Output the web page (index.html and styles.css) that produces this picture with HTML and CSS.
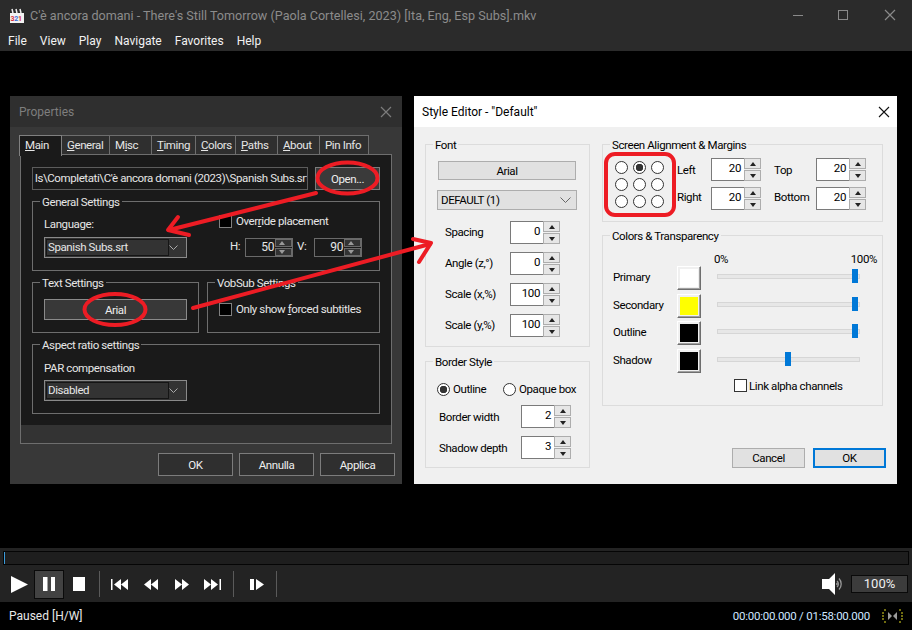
FILE: index.html
```html
<!DOCTYPE html>
<html lang="en">
<head>
    <meta charset="UTF-8">
    <title>Media Player Classic</title>
    <link rel="stylesheet" href="styles.css">
</head>
<body>
<div class="app">
    <header class="titlebar">
        <svg class="app-icon" width="16" height="16" viewBox="0 0 16 16">
            <rect x="1" y="5" width="14" height="10" fill="#f2f2f2"/>
            <path d="M1 1h14v4H1z" fill="#2a2a2a"/>
            <path d="M3 1l1 4M7 1l1 4M11 1l1 4" stroke="#eee" stroke-width="1.500"/>
            <text class="icon-digits" x="1.500" y="13"><tspan fill="#d8343a">3</tspan><tspan fill="#3a6fd8">2</tspan><tspan fill="#d8343a">1</tspan></text>
        </svg>
        <span class="title-text">C'è ancora domani - There's Still Tomorrow (Paola Cortellesi, 2023) [Ita, Eng, Esp Subs].mkv</span>
        <div class="win-controls">
            <svg width="46" height="26" viewBox="0 0 46 26"><path d="M18 15.500h10" stroke="#8a8a8a"/></svg>
            <svg width="46" height="26" viewBox="0 0 46 26"><rect x="17.500" y="10.500" width="9" height="9" fill="none" stroke="#8a8a8a"/></svg>
            <svg width="46" height="26" viewBox="0 0 46 26"><path d="M18 10l10 10M28 10l-10 10" stroke="#8a8a8a" stroke-width="1.200"/></svg>
        </div>
    </header>
    <nav class="menubar">
        <span>File</span><span>View</span><span>Play</span><span>Navigate</span><span>Favorites</span><span>Help</span>
    </nav>

    <main class="video"></main>

    <div class="seek-wrap">
        <div class="seekbar"><div class="seek-pos"></div></div>
    </div>
    <div class="toolbar">
        <button class="tool tool-first"><svg width="18" height="17" viewBox="0 0 18 17"><path d="M0 0l17 8.500L0 17z" fill="#fff"/></svg></button>
        <button class="tool tool-active"><svg width="12" height="14" viewBox="0 0 12 14"><path d="M0 0h4.500v14H0zM8 0h4v14H8z" fill="#fff"/></svg></button>
        <button class="tool"><svg width="12" height="14" viewBox="0 0 12 14"><rect width="12" height="14" fill="#fff"/></svg></button>
        <i class="tool-sep"></i>
        <button class="tool tool-sm"><svg width="17" height="11" viewBox="0 0 17 11"><path d="M0 0h1.500v11H0zM10 0v11L3 5.500zM17 0v11l-7-5.500z" fill="#fff"/></svg></button>
        <button class="tool tool-sm"><svg width="14" height="11" viewBox="0 0 14 11"><path d="M7 0v11L0 5.500zM14 0v11L7 5.500z" fill="#fff"/></svg></button>
        <button class="tool tool-sm"><svg width="14" height="11" viewBox="0 0 14 11"><path d="M0 0v11l7-5.500zM7 0v11l7-5.500z" fill="#fff"/></svg></button>
        <button class="tool tool-sm"><svg width="17" height="11" viewBox="0 0 17 11"><path d="M0 0v11l7-5.500zM7 0v11l7-5.500zM15.500 0H17v11h-1.500z" fill="#fff"/></svg></button>
        <i class="tool-sep"></i>
        <button class="tool tool-step"><svg width="14" height="11" viewBox="0 0 14 11"><path d="M0 0h4v11H0zM6 0v11l8-5.500z" fill="#fff"/></svg></button>
        <i class="tool-sep tool-sep-last"></i>
        <svg class="speaker" width="23" height="22" viewBox="0 0 23 22">
            <path d="M0 6h7l6-6v22l-6-6H0z" fill="#fff"/>
            <path d="M15 8a4 4 0 0 1 0 6M17 5.500a8 8 0 0 1 0 11M14.500 10a1.500 1.500 0 0 1 0 2" fill="none" stroke="#9a9a9a" stroke-width="1.300"/>
        </svg>
        <div class="volume">100%</div>
    </div>
    <footer class="statusbar">
        <span class="status-text">Paused [H/W]</span>
        <span class="status-time">00:00:00.000 / 01:58:00.000</span>
        <svg class="status-icon" width="21" height="14" viewBox="0 0 21 14">
            <path d="M6 3l4 4-4 4zM15 3l-4 4 4 4z" fill="#9b9b9b"/>
            <path d="M2 1h2M0 4h2M0 7h2M0 10h2M2 13h2M17 1h2M19 4h2M19 7h2M19 10h2M17 13h2" stroke="#e0d820"/>
        </svg>
    </footer>

    <!-- Properties dialog -->
    <section class="dialog dialog-dark">
        <div class="dlg-title">
            <span>Properties</span>
            <svg width="12" height="12" viewBox="0 0 12 12"><path d="M1 1l10 10M11 1L1 11" stroke="#7c7c7c" stroke-width="1.200"/></svg>
        </div>
        <div class="dlg-main">
            <div class="tabs">
                <span class="tab tab-on tab-w43"><u>M</u>ain</span>
                <span class="tab tab-w48"><u>G</u>eneral</span>
                <span class="tab tab-w42">M<u>i</u>sc</span>
                <span class="tab tab-w44"><u>T</u>iming</span>
                <span class="tab tab-w40"><u>C</u>olors</span>
                <span class="tab tab-w42"><u>P</u>aths</span>
                <span class="tab tab-w42"><u>A</u>bout</span>
                <span class="tab tab-w49">Pin Info</span>
            </div>
            <div class="tab-page">
                <div class="page-body">
                    <div class="path-row">
                        <div class="edit-path">ls\Completati\C'è ancora domani (2023)\Spanish Subs.srt</div>
                        <button class="dbtn dbtn-open">Open...</button>
                    </div>
                    <div class="group group-general">
                        <span class="group-title">General Settings</span>
                        <div class="gen-left">
                            <div class="lbl">Language:</div>
                            <div class="combo combo-dark"><span class="combo-val">Spanish Subs.srt</span><svg width="9" height="5" viewBox="0 0 9 5"><path d="M.5.500l4 4 4-4" fill="none" stroke="#aaa"/></svg></div>
                        </div>
                        <div class="gen-right">
                            <label class="check"><i class="box box-dark"></i><span>Over<u>r</u>ide placement</span></label>
                            <div class="hv-row">
                                <span class="hv-h">H:</span>
                                <div class="spin spin-dark spin-48"><span class="spin-val">50</span><span class="spin-btns"><i class="up"></i><i class="down"></i></span></div>
                                <span class="hv-v">V:</span>
                                <div class="spin spin-dark spin-48"><span class="spin-val">90</span><span class="spin-btns"><i class="up"></i><i class="down"></i></span></div>
                            </div>
                        </div>
                    </div>
                    <div class="group-pair">
                        <div class="group group-text">
                            <span class="group-title">Text Settings</span>
                            <button class="dbtn dbtn-font">Arial</button>
                        </div>
                        <div class="group group-vob">
                            <span class="group-title">VobSub Settings</span>
                            <label class="check"><i class="box box-dark"></i><span>Only show <u>f</u>orced subtitles</span></label>
                        </div>
                    </div>
                    <div class="group group-aspect">
                        <span class="group-title">Aspect ratio settings</span>
                        <div class="lbl">PAR compensation</div>
                        <div class="combo combo-dark"><span class="combo-val">Disabled</span><svg width="9" height="5" viewBox="0 0 9 5"><path d="M.5.500l4 4 4-4" fill="none" stroke="#aaa"/></svg></div>
                    </div>
                </div>
                <div class="page-strip"></div>
            </div>
            <div class="dlg-buttons">
                <button class="dbtn">OK</button>
                <button class="dbtn">Annulla</button>
                <button class="dbtn">Applica</button>
            </div>
        </div>
    </section>

    <!-- Style editor dialog -->
    <section class="dialog dialog-light">
        <div class="dlg-title">
            <span>Style Editor - "Default"</span>
            <svg width="12" height="12" viewBox="0 0 12 12"><path d="M1 1l10 10M11 1L1 11" stroke="#111" stroke-width="1.100"/></svg>
        </div>
        <div class="style-body">
            <div class="style-left">
                <div class="group lgroup group-font">
                    <span class="group-title">Font</span>
                    <button class="lbtn lbtn-font">Arial</button>
                    <div class="combo combo-light"><span>DEFAULT (1)</span><svg width="11" height="6" viewBox="0 0 11 6"><path d="M.5.500l5 5 5-5" fill="none" stroke="#666"/></svg></div>
                    <div class="font-rows">
                        <span>Spacing</span>
                        <div class="spin spin-light"><span class="spin-val">0</span><span class="spin-btns"><i class="up"></i><i class="down"></i></span></div>
                        <span>Angle (z,°)</span>
                        <div class="spin spin-light"><span class="spin-val">0</span><span class="spin-btns"><i class="up"></i><i class="down"></i></span></div>
                        <span>Scale (x,%)</span>
                        <div class="spin spin-light"><span class="spin-val">100</span><span class="spin-btns"><i class="up"></i><i class="down"></i></span></div>
                        <span>Scale (y,%)</span>
                        <div class="spin spin-light"><span class="spin-val">100</span><span class="spin-btns"><i class="up"></i><i class="down"></i></span></div>
                    </div>
                </div>
                <div class="group lgroup group-border">
                    <span class="group-title">Border Style</span>
                    <div class="radio-row">
                        <label class="radio-label radio-outline"><i class="radio radio-on"></i>Outline</label>
                        <label class="radio-label"><i class="radio"></i>Opaque box</label>
                    </div>
                    <div class="border-rows">
                        <span>Border width</span>
                        <div class="spin spin-light"><span class="spin-val">2</span><span class="spin-btns"><i class="up"></i><i class="down"></i></span></div>
                        <span>Shadow depth</span>
                        <div class="spin spin-light"><span class="spin-val">3</span><span class="spin-btns"><i class="up"></i><i class="down"></i></span></div>
                    </div>
                </div>
            </div>
            <div class="style-right">
                <div class="group lgroup group-screen">
                    <span class="group-title">Screen Alignment &amp; Margins</span>
                    <div class="radio-grid">
                        <i class="radio"></i><i class="radio radio-on"></i><i class="radio"></i>
                        <i class="radio"></i><i class="radio"></i><i class="radio"></i>
                        <i class="radio"></i><i class="radio"></i><i class="radio"></i>
                    </div>
                    <div class="margin-grid">
                        <span>Left</span>
                        <div class="spin spin-light"><span class="spin-val">20</span><span class="spin-btns"><i class="up"></i><i class="down"></i></span></div>
                        <span class="margin-side">Top</span>
                        <div class="spin spin-light"><span class="spin-val">20</span><span class="spin-btns"><i class="up"></i><i class="down"></i></span></div>
                        <span class="margin-low">Right</span>
                        <div class="spin spin-light"><span class="spin-val">20</span><span class="spin-btns"><i class="up"></i><i class="down"></i></span></div>
                        <span class="margin-side margin-low">Bottom</span>
                        <div class="spin spin-light"><span class="spin-val">20</span><span class="spin-btns"><i class="up"></i><i class="down"></i></span></div>
                    </div>
                </div>
                <div class="group lgroup group-colors">
                    <span class="group-title">Colors &amp; Transparency</span>
                    <div class="pct-row"><span>0%</span><span>100%</span></div>
                    <div class="color-rows">
                        <span>Primary</span>
                        <div class="swatch"><i class="swatch-white"></i></div>
                        <div class="slider"><i class="thumb" style="left: 95.1%"></i></div>
                        <span>Secondary</span>
                        <div class="swatch"><i class="swatch-yellow"></i></div>
                        <div class="slider"><i class="thumb" style="left: 95.1%"></i></div>
                        <span>Outline</span>
                        <div class="swatch"><i class="swatch-black"></i></div>
                        <div class="slider"><i class="thumb" style="left: 95.1%"></i></div>
                        <span>Shadow</span>
                        <div class="swatch"><i class="swatch-black"></i></div>
                        <div class="slider"><i class="thumb" style="left: 47.5%"></i></div>
                    </div>
                    <label class="check check-link"><i class="box box-light"></i><span>Link alpha channels</span></label>
                </div>
                <div class="style-buttons">
                    <button class="lbtn">Cancel</button>
                    <button class="lbtn lbtn-default">OK</button>
                </div>
            </div>
        </div>
    </section>

    <!-- red marks drawn over the screenshot -->
    <svg class="marks" width="912" height="630" viewBox="0 0 912 630">
        <g fill="none" stroke="#ed1c24" stroke-width="4" stroke-linecap="round" stroke-linejoin="round">
            <ellipse cx="347.500" cy="178" rx="30" ry="15.500"/>
            <ellipse cx="115" cy="309.500" rx="30.500" ry="15.500"/>
            <rect x="606" y="154" width="68" height="61" rx="9"/>
            <path d="M316 193L169 230"/>
            <path d="M178 217L168 230L189 235"/>
            <path d="M193 308L430 244"/>
            <path d="M413 239L431 243L419 262"/>
        </g>
    </svg>
</div>
</body>
</html>
```

FILE: styles.css
```css
* {
    box-sizing: border-box;
}

body {
    margin: 0;
    background: #000;
    font-family: Roboto, "Liberation Sans", sans-serif;
    font-size: 12px;
    overflow: hidden;
}

button {
    font: inherit;
    letter-spacing: inherit;
    padding: 0;
}

i {
    display: block;
}

.app {
    position: relative;
    width: 912px;
    height: 630px;
    display: flex;
    flex-direction: column;
    background: #000;
}

/* main window chrome */
.titlebar {
    height: 26px;
    flex: none;
    display: flex;
    align-items: center;
    background: #2b2b2b;
    padding: 5px 0 0 9px;
}

.icon-digits {
    font-size: 7px;
    font-weight: 700;
    letter-spacing: -.3px;
}

.title-text {
    margin-left: 5px;
    color: #8c8c8c;
    font-size: 12.600px;
}

.win-controls {
    margin-left: auto;
    margin-right: -1px;
    display: flex;
    height: 26px;
    margin-top: -5px;
}

.menubar {
    height: 25px;
    flex: none;
    display: flex;
    align-items: center;
    gap: 13px;
    padding: 5px 0 0 8px;
    background: #2b2b2b;
    color: #f2f2f2;
}

.video {
    flex: 1;
}

.seek-wrap {
    height: 18px;
    flex: none;
    padding: 3px 3px 1px;
    background: #232323;
}

.seekbar {
    height: 14px;
    background: #1e1e1e;
    border: 1px solid #050505;
}

.seek-pos {
    width: 1px;
    height: 12px;
    background: #3a9ad9;
}

.toolbar {
    height: 36px;
    flex: none;
    display: flex;
    align-items: center;
    padding-left: 4px;
    background: #232323;
}

.tool {
    width: 30px;
    height: 29px;
    display: flex;
    align-items: center;
    justify-content: center;
    background: none;
    border: 1px solid transparent;
}

.tool-first {
    padding-left: 1px;
}

.tool-active {
    background: #424242;
    border-color: #0a0a0a;
}

.tool-sm {
    width: 31px;
}

.tool-step {
    width: 38px;
}

.tool-sep {
    width: 1px;
    height: 26px;
    margin: 0 4px 0 5px;
    background: #5a5a5a;
}

.tool-sep-last {
    margin: 0;
}

.speaker {
    margin-left: auto;
}

.volume {
    width: 57px;
    height: 18px;
    margin: 0 4px 0 6px;
    background: #3c3c3c;
    border: 1px solid #0a0a0a;
    color: #f0f0f0;
    font-size: 13px;
    line-height: 16px;
    text-align: center;
}

.statusbar {
    height: 28px;
    flex: none;
    display: flex;
    align-items: center;
    padding: 0 9px;
    background: #000;
}

.status-text {
    color: #e8e8e8;
}

.status-time {
    margin-left: auto;
    color: #cfe6ff;
    font-size: 11.500px;
    letter-spacing: -.25px;
}

.status-icon {
    margin-left: 12px;
}

/* dialogs float over the video, like windows on a desktop */
.dialog {
    position: absolute;
    top: 96px;
    height: 388px;
}

.dialog-dark {
    left: 10px;
    width: 392px;
    background: #383838;
    color: #e6e6e6;
}

.dialog-light {
    left: 414px;
    width: 483px;
    background: #f0f0f0;
    color: #000;
}

.dlg-title {
    height: 31px;
    display: flex;
    align-items: center;
    justify-content: space-between;
    padding: 0 10px 0 9px;
}

.dialog-dark .dlg-title {
    background: #2f2f2f;
    color: #7e7e7e;
}

.dialog-light .dlg-title {
    background: #fff;
    padding-left: 8px;
    padding-right: 7px;
}

/* Segoe UI runs narrower than Roboto */
.dlg-main,
.style-body {
    font-size: 11.500px;
    letter-spacing: -.4px;
}

.tabs {
    display: flex;
    height: 20px;
    margin: 8px 0 -1px 9px;
    position: relative;
}

.tab {
    height: 20px;
    padding: 2px 0 0 5px;
    background: #2f2f2f;
    border: 1px solid #6e6e6e;
    border-left: 0;
}

.tab-on {
    background: #1a1a1a;
    border: 1px solid #808080;
    border-bottom: 0;
    height: 21px;
}

.tab-w43 { width: 43px; }
.tab-w48 { width: 48px; }
.tab-w42 { width: 42px; }
.tab-w44 { width: 44px; }
.tab-w40 { width: 40px; }
.tab-w49 { width: 49px; }

.tab-page {
    height: 290px;
    margin-left: 10px;
    width: 372px;
    display: flex;
    flex-direction: column;
    background: #1a1a1a;
    border: 1px solid #6e6e6e;
}

.page-body {
    padding: 12px 11px 0;
}

.page-strip {
    margin-top: auto;
    height: 18px;
    background: #333;
}

.path-row {
    display: flex;
    gap: 7px;
}

.edit-path {
    width: 276px;
    height: 23px;
    padding: 3px 0 0 2px;
    border: 1px solid #5c5c5c;
    white-space: nowrap;
    overflow: hidden;
}

.dbtn {
    width: 75px;
    height: 23px;
    color: #eee;
    background: #2f2f2f;
    border: 1px solid #7c7c7c;
}

.dbtn-open {
    width: 65px;
    background: #3a3a3a;
}

.dbtn-font {
    width: 143px;
    height: 21px;
    background: #383838;
    border-color: #8a8a8a;
}

.group {
    position: relative;
    border: 1px solid #6e6e6e;
}

.group-title {
    position: absolute;
    top: -7px;
    left: 7px;
    padding: 0 2px;
    line-height: 14px;
    background: #1a1a1a;
    white-space: nowrap;
}

.group-general {
    height: 70px;
    margin-top: 11px;
    display: flex;
    padding-left: 11px;
    gap: 32px;
}

.gen-left {
    width: 143px;
    padding-top: 14px;
}

.lbl {
    line-height: 16px;
    margin-bottom: 5px;
}

.check {
    display: flex;
    align-items: center;
    gap: 4px;
    line-height: 16px;
    white-space: nowrap;
}

.box {
    width: 13px;
    height: 13px;
    flex: none;
}

.box-dark {
    background: #000;
    border: 1px solid #808080;
}

.box-light {
    background: #fff;
    border: 1px solid #333;
}

.gen-right {
    padding-top: 11px;
}

.hv-row {
    display: flex;
    align-items: center;
    margin: 9px 0 0 11px;
}

.hv-h {
    width: 15px;
    padding-bottom: 3px;
}

.hv-v {
    width: 17px;
    margin-left: 4px;
    padding-bottom: 3px;
}

.combo {
    display: flex;
    align-items: center;
    justify-content: space-between;
}

.combo-dark {
    width: 143px;
    height: 21px;
    padding: 2px 8px 2px 2px;
    background: #333;
    border: 1px solid #8a8a8a;
}

.combo-val {
    width: 121px;
    height: 15px;
    padding-left: 1px;
    line-height: 15px;
    outline: 1px solid #151515;
}

.combo-light {
    width: 140px;
    height: 20px;
    margin: 10px 0 0 11px;
    padding: 0 5px 0 3px;
    background: #e1e1e1;
    border: 1px solid #adadad;
}

.group-pair {
    display: flex;
    gap: 8px;
    margin-top: 11px;
}

.group-text {
    width: 167px;
    height: 51px;
    padding: 16px 0 0 11px;
}

.group-vob {
    width: 173px;
    height: 51px;
    padding: 18px 0 0 11px;
}

.group-aspect {
    height: 70px;
    margin-top: 11px;
    padding: 15px 0 0 11px;
}

.group-aspect .lbl {
    margin-bottom: 4px;
}

.dlg-buttons {
    display: flex;
    justify-content: flex-end;
    gap: 6px;
    padding-right: 7px;
    margin-top: 9px;
}

/* spin edits */
.spin {
    display: flex;
    width: 50px;
    height: 23px;
}

.spin-48 {
    width: 48px;
    height: 19px;
}

.spin-val {
    flex: 1;
    padding-right: 3px;
    text-align: right;
}

.spin-btns {
    width: 17px;
    display: flex;
    flex-direction: column;
    gap: 1px;
}

.spin-btns i {
    flex: 1;
    position: relative;
}

.spin-btns i::after {
    content: "";
    position: absolute;
    left: 5px;
    top: 3px;
    border-left: 3px solid transparent;
    border-right: 3px solid transparent;
}

.spin-btns .up::after {
    border-bottom: 4px solid var(--arrow);
}

.spin-btns .down::after {
    border-top: 4px solid var(--arrow);
}

.spin-dark {
    --arrow: #9a9a9a;
    border: 1px solid #6a6a6a;
    line-height: 17px;
    font-size: 12px;
}

.spin-dark .spin-val {
    padding-right: 1px;
}

.spin-dark .spin-btns i {
    background: #333;
    border: 1px solid #6a6a6a;
}

.spin-dark .spin-btns i::after {
    left: 3px;
    top: 1px;
}

.spin-light {
    --arrow: #222;
    line-height: 18px;
}

.spin-light .spin-val {
    background: #fff;
    border: 1px solid #7a7a7a;
    border-right: 0;
}

.spin-light .spin-btns i {
    background: #e6e6e6;
    border: 1px solid #adadad;
}

/* style editor */
.style-body {
    display: flex;
    gap: 12px;
    padding: 17px 0 0 11px;
}

.style-left {
    width: 165px;
}

.style-right {
    width: 281px;
}

.lgroup {
    border-color: #dcdcdc;
}

.lgroup .group-title {
    background: #f0f0f0;
}

.group-font {
    height: 203px;
    padding-top: 16px;
}

.lbtn {
    height: 20px;
    width: 73px;
    background: #e1e1e1;
    border: 1px solid #adadad;
}

.lbtn-font {
    display: block;
    width: 138px;
    height: 19px;
    margin-left: 12px;
}

.lbtn-default {
    border: 2px solid #0078d7;
}

.font-rows {
    display: grid;
    grid-template-columns: 65px 50px;
    grid-auto-rows: 23px;
    row-gap: 8px;
    align-items: center;
    margin: 11px 0 0 19px;
}

.font-rows > span {
    padding-bottom: 2px;
}

.group-border {
    height: 107px;
    margin-top: 14px;
    padding: 20px 0 0 11px;
}

.radio-row {
    display: flex;
    line-height: 14px;
}

.radio-label {
    display: flex;
    align-items: center;
    gap: 3px;
}

.radio-outline {
    width: 66px;
}

.radio {
    width: 13px;
    height: 13px;
    flex: none;
    border: 1px solid #333;
    border-radius: 50%;
    background: #fff;
}

.radio-on {
    background: radial-gradient(circle, #333 0 3.500px, #fff 4px);
}

.border-rows {
    display: grid;
    grid-template-columns: 82px 50px;
    grid-auto-rows: 23px;
    row-gap: 8px;
    align-items: center;
    margin: 9px 0 0 2px;
}

.group-screen {
    height: 78px;
    display: flex;
    gap: 13px;
    padding: 16px 0 0 12px;
}

.radio-grid {
    display: grid;
    grid-template-columns: repeat(3, 13px);
    grid-auto-rows: 13px;
    column-gap: 5px;
    row-gap: 4px;
    align-self: flex-start;
}

.margin-grid {
    display: grid;
    grid-template-columns: 34px 50px 55px 50px;
    grid-auto-rows: 23px;
    row-gap: 6px;
    align-items: center;
    margin-top: -3px;
}

.margin-side {
    margin-left: 13px;
}

.margin-low {
    padding-bottom: 3px;
}

.group-colors {
    height: 171px;
    margin-top: 13px;
    padding: 15px 0 0 10px;
}

.pct-row {
    display: flex;
    justify-content: space-between;
    line-height: 16px;
    margin-left: 101px;
    margin-right: 5px;
}

.color-rows {
    display: grid;
    grid-template-columns: 64px 24px 159px;
    grid-auto-rows: 24px;
    row-gap: 3.670px;
    align-items: center;
    margin-top: -1px;
}

.color-rows > span {
    padding-bottom: 2px;
}

.color-rows .slider {
    margin-left: 16px;
    width: 143px;
}

.swatch {
    width: 24px;
    height: 24px;
    padding: 2px;
    background: #f0f0f0;
    border: 1px solid;
    border-color: #fff #6e6e6e #6e6e6e #fff;
    box-shadow: inset -1px -1px 0 #a0a0a0;
}

.swatch i {
    width: 18px;
    height: 18px;
}

.swatch-white { background: #fff; }
.swatch-yellow { background: #ff0; }
.swatch-black { background: #000; }

.slider {
    position: relative;
    height: 5px;
    margin-top: -3px;
    background: #e7e7e7;
    border: 1px solid #d6d6d6;
}

.thumb {
    position: absolute;
    top: -6px;
    width: 6px;
    height: 14px;
    background: #0078d7;
}

.check-link {
    margin: 5px 0 0 121px;
    gap: 2px;
}

.style-buttons {
    display: flex;
    justify-content: flex-end;
    gap: 8px;
    margin: 42px -3px 0 0;
}

.marks {
    position: absolute;
    left: 0;
    top: 0;
    pointer-events: none;
}
```
